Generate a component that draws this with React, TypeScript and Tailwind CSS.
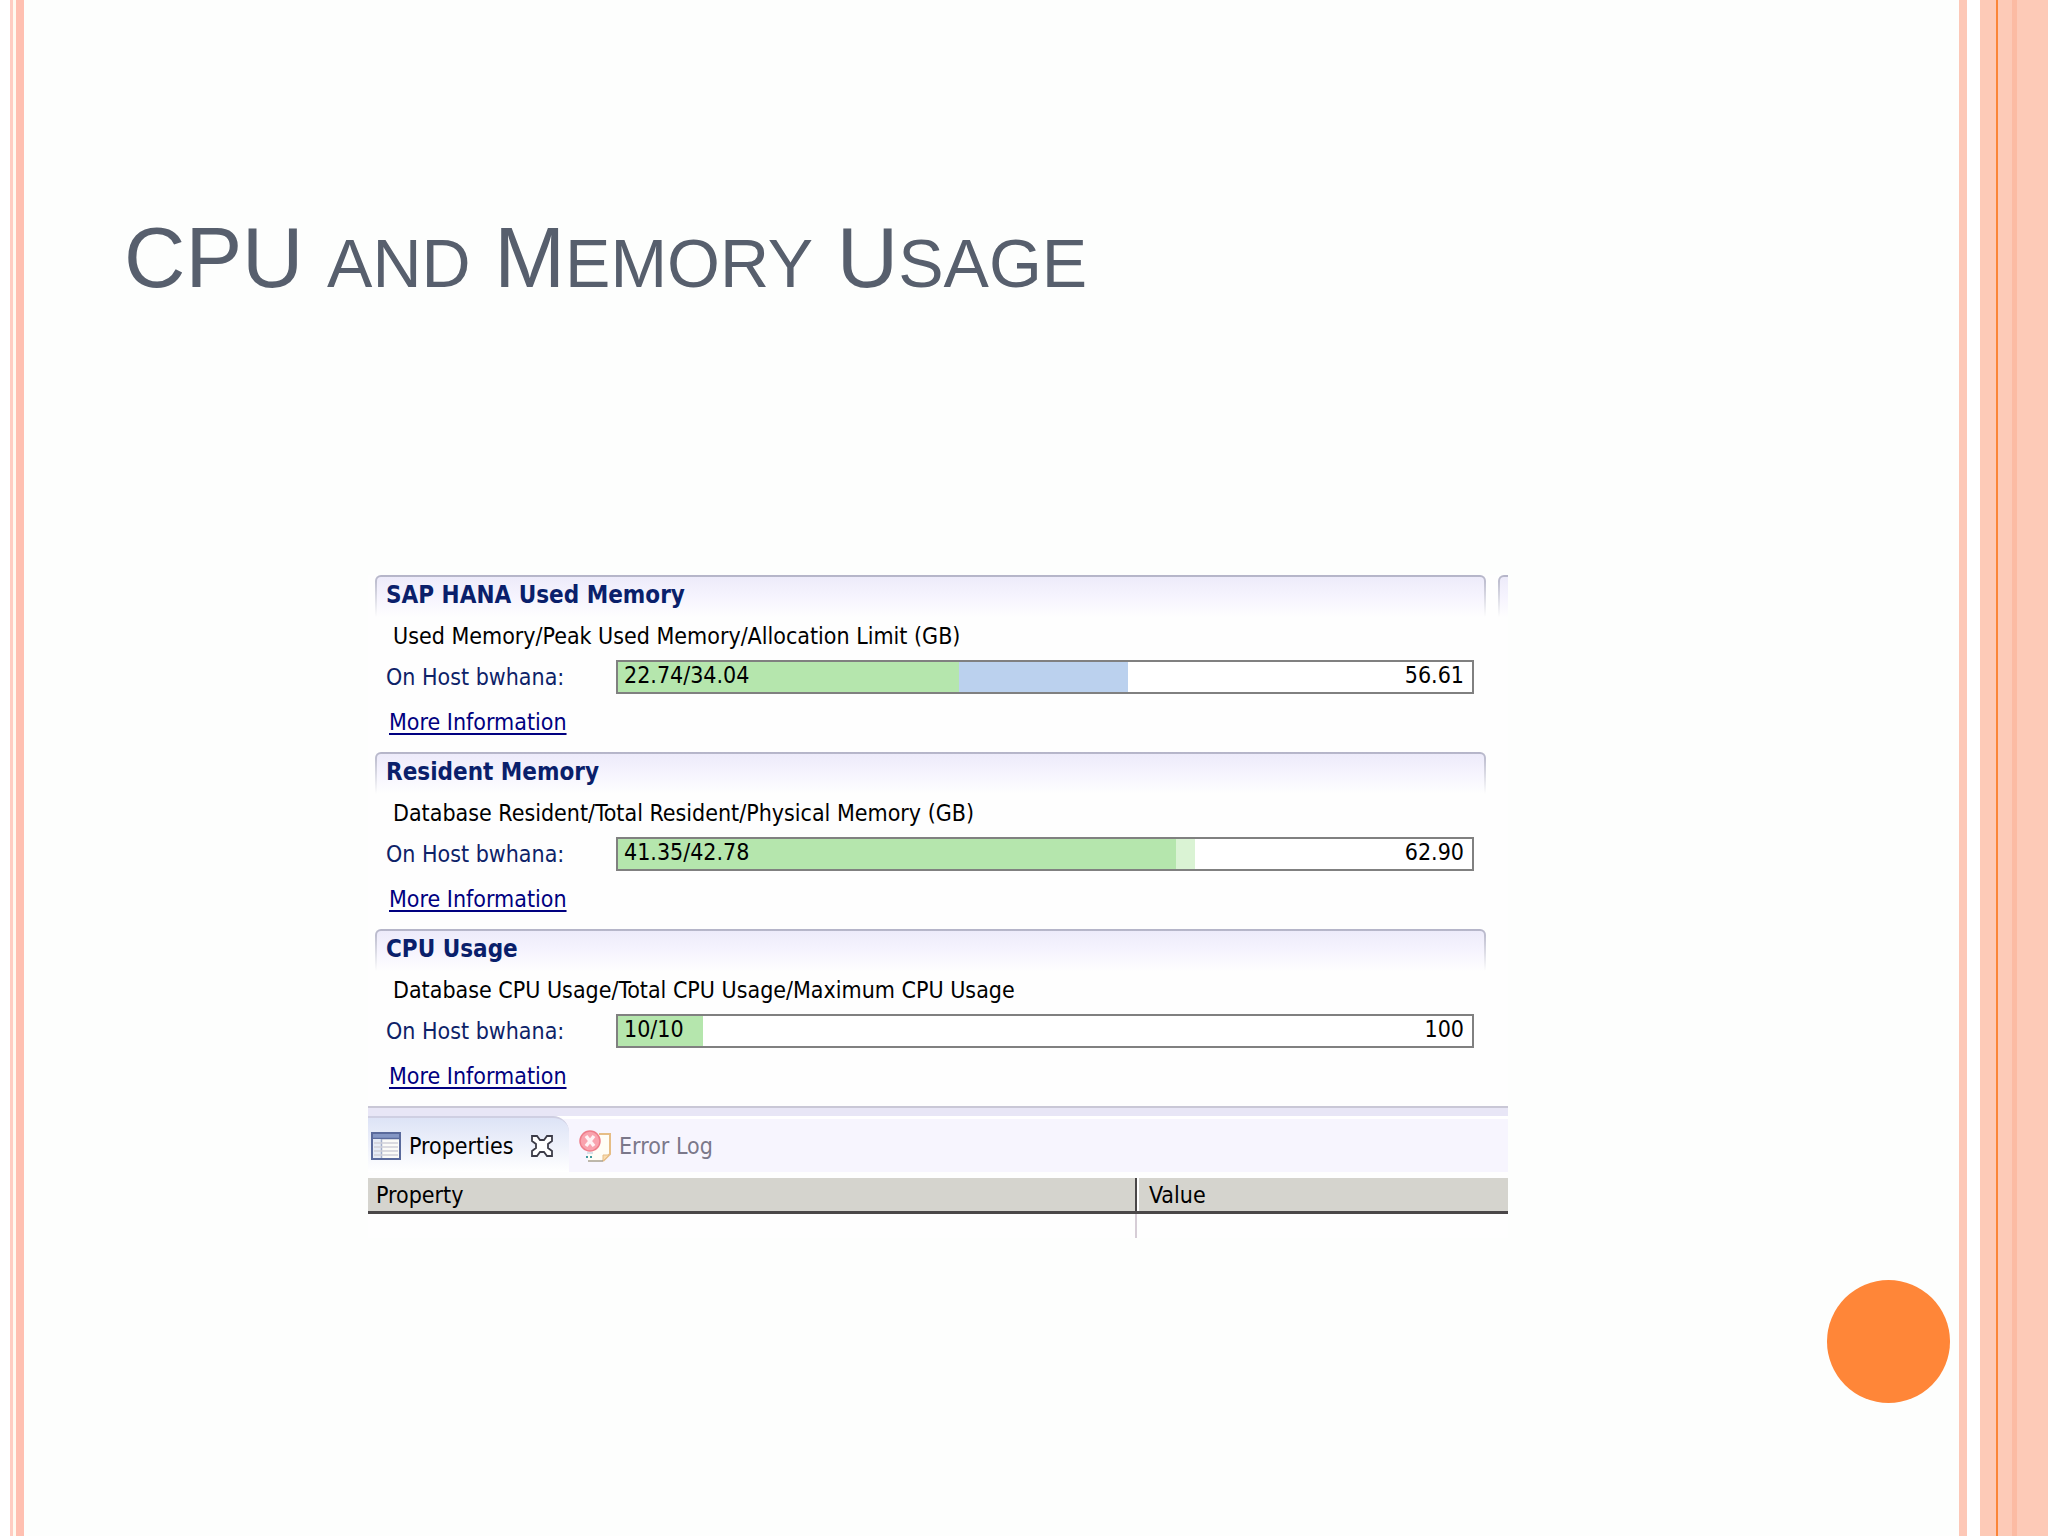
import React from 'react';

interface Usage {
    title: string;
    caption: string;
    used: number;
    peak: number;
    limit: number;
    usedLabel: string;
    limitLabel: string;
    peakClass: string;
}

const usages: Usage[] = [
    {
        title: "SAP HANA Used Memory",
        caption: "Used Memory/Peak Used Memory/Allocation Limit (GB)",
        used: 22.74,
        peak: 34.04,
        limit: 56.61,
        usedLabel: "22.74/34.04",
        limitLabel: "56.61",
        peakClass: "bg-[#bbd1ee]",
    },
    {
        title: "Resident Memory",
        caption: "Database Resident/Total Resident/Physical Memory (GB)",
        used: 41.35,
        peak: 42.78,
        limit: 62.9,
        usedLabel: "41.35/42.78",
        limitLabel: "62.90",
        peakClass: "bg-[#daf3d4]",
    },
    {
        title: "CPU Usage",
        caption: "Database CPU Usage/Total CPU Usage/Maximum CPU Usage",
        used: 10,
        peak: 10,
        limit: 100,
        usedLabel: "10/10",
        limitLabel: "100",
        peakClass: "bg-[#daf3d4]",
    },
];

// The full scale stops just short of the frame
const toPercent = (value: number, limit: number) => `${(value / limit) * 99.4}%`;

const UsageBar: React.FC<{ usage: Usage }> = ({ usage }) => (
    <div
        role="meter"
        aria-label={usage.title}
        aria-valuemin={0}
        aria-valuemax={usage.limit}
        aria-valuenow={usage.used}
        className="relative flex-1 h-[34px] border-2 border-[#808080] bg-white"
    >
        <div className={`absolute inset-y-0 left-0 ${usage.peakClass}`} style={{ width: toPercent(usage.peak, usage.limit) }} />
        <div className="absolute inset-y-0 left-0 bg-[#b5e6ad]" style={{ width: toPercent(usage.used, usage.limit) }} />
        <div className="relative flex justify-between pl-1.5 pr-2 leading-[26px] text-black">
            <span>{usage.usedLabel}</span>
            <span>{usage.limitLabel}</span>
        </div>
    </div>
);

const UsageSection: React.FC<{ usage: Usage }> = ({ usage }) => (
    <section className="pb-4">
        <div className="h-[42px] rounded-t-md bg-linear-to-b from-[#b4b4c8] to-[#fefefe] px-0.5 pt-0.5">
            <div className="h-full rounded-t-sm bg-linear-to-b from-[#edebfa] via-[#f6f4fe] to-[#fefefe] pl-[9px] pt-1">
                <h2 className="font-bold text-[24px] leading-7 text-[#0a1f6b]">{usage.title}</h2>
            </div>
        </div>
        <p className="mt-[5px] pl-[18px] text-black">{usage.caption}</p>
        <div className="mt-2.5 flex items-center pl-[11px] pr-3">
            <span className="w-[230px] text-[#0d2268]">On Host bwhana:</span>
            <UsageBar usage={usage} />
        </div>
        <div className="mt-3.5 flex pl-3.5">
            <a href="#" className="text-[#000080] underline decoration-2 underline-offset-3 [text-decoration-skip-ink:none]">More Information</a>
        </div>
    </section>
);

const PropertiesIcon = () => (
    <svg width="30" height="28" viewBox="0 0 30 28" fill="none" aria-hidden="true">
        <rect x="1" y="1" width="28" height="26" fill="#fbfbf8" stroke="#5a6a9c" strokeWidth="2" />
        <path d="M2 2H28V6H2Z" fill="#8496c4" />
        <path d="M2 6.5H28" stroke="#5a6a9c" strokeWidth="1.5" />
        <path d="M2 7H10V26H2Z" fill="#e6ebf5" />
        <path d="M10.5 7V26" stroke="#a3aecb" strokeWidth="1.5" />
        <path d="M3 11H27M3 15H27M3 19H27M3 23H27" stroke="#d0d0d8" strokeWidth="1.5" />
    </svg>
);

const CloseIcon = () => (
    <svg width="22" height="22" viewBox="0 0 22 22" fill="#fff" stroke="#3c3c48" strokeWidth="1.8" aria-hidden="true">
        <path d="M1 1H6L9 5H13L16 1H21V6L17 9V13L21 16V21H16L13 17H9L6 21H1V16L5 13V9L1 6Z" />
    </svg>
);

const ErrorLogIcon = () => (
    <svg width="32" height="32" viewBox="0 0 32 32" fill="none" aria-hidden="true">
        <path d="M18 4H31V24L24 31H9V20Z" fill="#fffdf6" />
        <path d="M20 4H31V24L24 31" stroke="#e6bd85" strokeWidth="2" />
        <path d="M24 31V25H30Z" fill="#fbdcae" stroke="#e6bd85" />
        <path d="M9 31H24" stroke="#a9a08f" strokeWidth="1.5" />
        <path d="M7 27H9M11 27H13" stroke="#3f9a9f" strokeWidth="2" />
        <path d="M8 23H14" stroke="#d8dfe8" strokeWidth="2" />
        <circle cx="11" cy="11" r="10" fill="#f9a3ae" stroke="#ee7d8a" strokeWidth="1.5" />
        <path d="M7 6L15 16M15 6L7 16" stroke="#fff2f4" strokeWidth="3.5" />
    </svg>
);

const LeftRail = () => (
    <div className="flex shrink-0 bg-white pl-2.5">
        <div className="w-[3px] bg-[#ffcdc2]" />
        <div className="w-[3px] bg-[#fffaf0]" />
        <div className="w-2 bg-[#ffc0b1]" />
    </div>
);

const RightRail = () => (
    <div className="flex shrink-0">
        <div className="w-2 bg-[#fdc8b7]" />
        <div className="w-[13px] bg-white" />
        <div className="w-4 bg-[#fdcab7]" />
        <div className="w-0.5 bg-[#fb8537]" />
        <div className="w-3.5 bg-[#fdcab7]" />
        <div className="w-[5px] bg-[#fcbba3]" />
        <div className="w-[31px] bg-[#fdcab7]" />
    </div>
);

export default function App() {
    return (
        <div className="flex min-h-screen bg-[#fdfefd]">
            <LeftRail />
            <main className="flex flex-1 flex-col pt-[210px]">
                <h1 className="pl-25 font-['Liberation_Sans',sans-serif] text-[85px] leading-24 text-[#575f6d]">
                    CPU <span className="text-[68px]">AND</span> M<span className="text-[68px]">EMORY</span> U<span className="text-[68px]">SAGE</span>
                </h1>

                <div className="mt-[264px] ml-[344px] mr-[451px] bg-[#fefefe] font-['DejaVu_Sans_Condensed','DejaVu_Sans',sans-serif] text-[23px] leading-7">
                    <div className="flex items-start gap-3 pl-[7px]">
                        <div className="flex-1">
                            {usages.map((usage) => (
                                <UsageSection key={usage.title} usage={usage} />
                            ))}
                        </div>
                        {/* Edge of the neighbouring column */}
                        <div className="h-[42px] w-2.5 rounded-tl-md bg-linear-to-b from-[#b4b4c8] to-[#fefefe] pl-0.5 pt-0.5">
                            <div className="h-full rounded-tl-sm bg-linear-to-b from-[#edebfa] via-[#f6f4fe] to-[#fefefe]" />
                        </div>
                    </div>

                    <div className="h-2.5 border-t-2 border-[#c9c7d6] bg-[#e8e6f6]" />
                    <div role="tablist" className="flex h-14 items-stretch border-t-3 border-white bg-[#f7f5fe]">
                        <button
                            role="tab"
                            aria-selected="true"
                            className="-mt-[3px] flex w-[201px] items-center rounded-tr-2xl border-t-2 border-[#cfcfe2] bg-linear-to-b from-[#dde3f6] to-white pl-[3px] pt-0.5 text-black"
                        >
                            <PropertiesIcon />
                            <span className="mx-2 flex-1 text-left">Properties</span>
                            <span className="mr-4"><CloseIcon /></span>
                        </button>
                        <button role="tab" aria-selected="false" className="flex items-center gap-2 pl-2.5 text-[#7b788a]">
                            <ErrorLogIcon />
                            Error Log
                        </button>
                    </div>
                    <table className="mt-1.5 w-full table-fixed border-collapse text-left text-black">
                        <thead>
                            <tr className="h-[34px] border-b-3 border-[#4a4748] bg-[#d5d4ce]">
                                <th className="w-[768px] border-r-2 border-r-[#4a4748] p-0 pl-2 pt-0.5 font-normal">Property</th>
                                <th className="p-0 pl-3 pt-0.5 font-normal shadow-[inset_2px_0_0_#fff]">Value</th>
                            </tr>
                        </thead>
                        <tbody>
                            <tr className="h-[26px]">
                                <td className="border-r-2 border-[#d6cdd6] p-0" />
                                <td className="p-0" />
                            </tr>
                        </tbody>
                    </table>
                </div>

                <div className="mt-[42px] mr-[9px] size-[123px] self-end rounded-full bg-[#ff8638]" />
            </main>
            <RightRail />
        </div>
    );
}
